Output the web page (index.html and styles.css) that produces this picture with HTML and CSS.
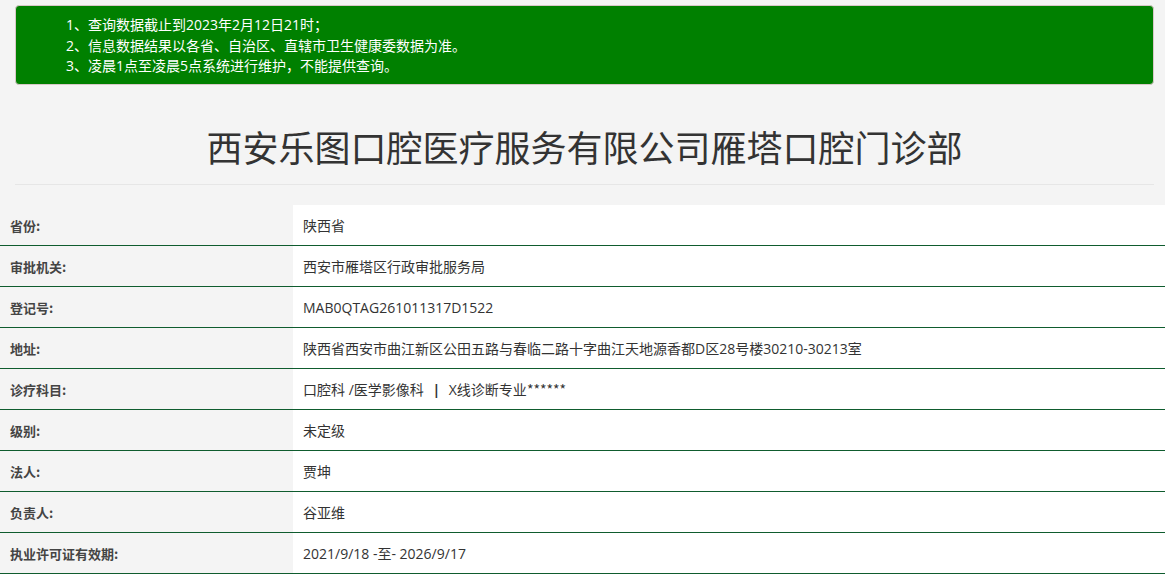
FILE: index.html
```html
<!DOCTYPE html>
<html lang="zh-CN">
<head>
<meta charset="utf-8">
<title>西安乐图口腔医疗服务有限公司雁塔口腔门诊部</title>
<link rel="stylesheet" href="styles.css">
</head>
<body>
<div class="wrap">
  <div class="notice">
    <p>1、查询数据截止到2023年2月12日21时；</p>
    <p>2、信息数据结果以各省、自治区、直辖市卫生健康委数据为准。</p>
    <p>3、凌晨1点至凌晨5点系统进行维护，不能提供查询。</p>
  </div>
  <h1 class="title">西安乐图口腔医疗服务有限公司雁塔口腔门诊部</h1>
</div>
<table class="info">
  <tr><th>省份:</th><td>陕西省</td></tr>
  <tr><th>审批机关:</th><td>西安市雁塔区行政审批服务局</td></tr>
  <tr><th>登记号:</th><td>MAB0QTAG261011317D1522</td></tr>
  <tr><th>地址:</th><td>陕西省西安市曲江新区公田五路与春临二路十字曲江天地源香都D区28号楼30210-30213室</td></tr>
  <tr><th>诊疗科目:</th><td>口腔科 /医学影像科 <span class="sep">|</span> X线诊断专业<span class="stars">******</span></td></tr>
  <tr><th>级别:</th><td>未定级</td></tr>
  <tr><th>法人:</th><td>贾坤</td></tr>
  <tr><th>负责人:</th><td>谷亚维</td></tr>
  <tr><th>执业许可证有效期:</th><td>2021/9/18 -至- 2026/9/17</td></tr>
</table>
</body>
</html>
```

FILE: styles.css
```css
html, body {
  margin: 0;
  padding: 0;
  background: #f4f4f4;
  font-family: "Open Sans", "Noto Sans CJK SC", sans-serif;
  color: #333;
}
.wrap {
  padding: 5px 11px 0 15px;
}
.notice {
  background: #008000;
  border: 1px solid #d8c8c8;
  border-radius: 4px;
  height: 80px;
  box-sizing: border-box;
  padding: 9px 0 0 50px;
  color: #fff;
  font-size: 14px;
  line-height: 20.5px;
}
.notice p {
  margin: 0;
}
.title {
  margin: 0;
  padding: 36px 0 13px;
  text-align: center;
  font-family: "Noto Sans CJK SC", sans-serif;
  font-size: 36px;
  font-weight: normal;
  line-height: 50px;
  color: #333;
  border-bottom: 1px solid #e6e6e6;
}
.info {
  margin-top: 20px;
  width: 100%;
  border-collapse: collapse;
}
.info th, .info td {
  height: 40px;
  padding: 0;
  border-bottom: 1px solid #0f5c2e;
  vertical-align: middle;
  text-align: left;
}
.info th {
  width: 283px;
  padding-left: 10px;
  font-family: "Noto Sans CJK SC", sans-serif;
  font-size: 13px;
  font-weight: bold;
  color: #444;
  background: #f4f4f4;
}
.info td {
  padding-left: 10px;
  font-size: 14px;
  background: #fff;
  color: #333;
}
.sep {
  font-weight: bold;
  padding: 0 5px;
}
.stars {
  font-family: "Noto Sans CJK SC", sans-serif;
}
```
